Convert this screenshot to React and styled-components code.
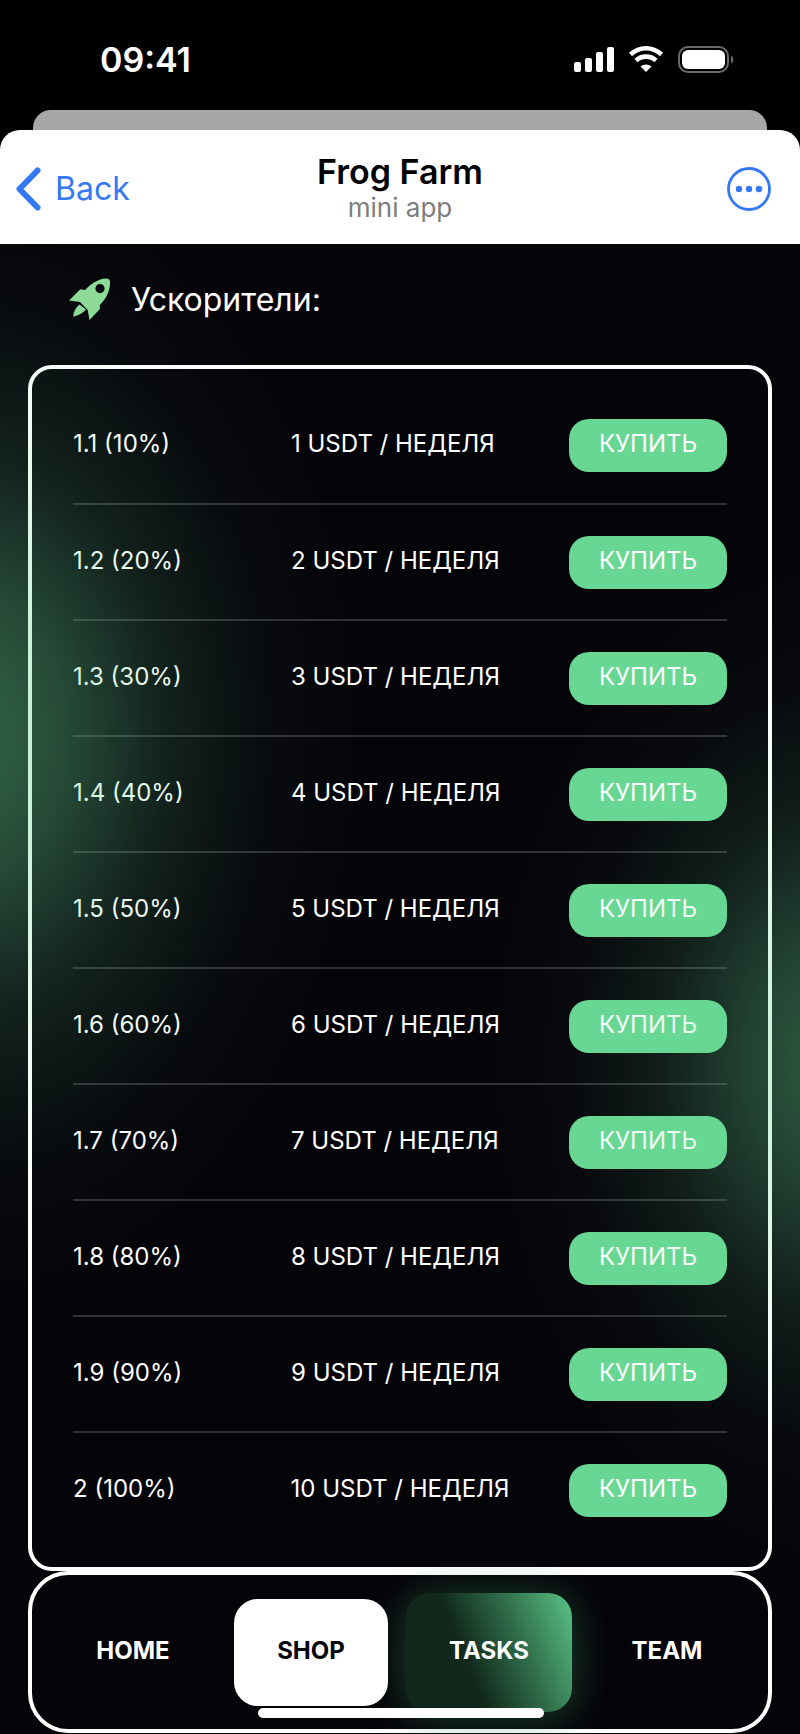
import React from "react";
import styled, { createGlobalStyle } from "styled-components";

const prices = [
  { id: 1, boost: "1.1 (10%)", price: "1 USDT / НЕДЕЛЯ" },
  { id: 2, boost: "1.2 (20%)", price: "2 USDT / НЕДЕЛЯ" },
  { id: 3, boost: "1.3 (30%)", price: "3 USDT / НЕДЕЛЯ" },
  { id: 4, boost: "1.4 (40%)", price: "4 USDT / НЕДЕЛЯ" },
  { id: 5, boost: "1.5 (50%)", price: "5 USDT / НЕДЕЛЯ" },
  { id: 6, boost: "1.6 (60%)", price: "6 USDT / НЕДЕЛЯ" },
  { id: 7, boost: "1.7 (70%)", price: "7 USDT / НЕДЕЛЯ" },
  { id: 8, boost: "1.8 (80%)", price: "8 USDT / НЕДЕЛЯ" },
  { id: 9, boost: "1.9 (90%)", price: "9 USDT / НЕДЕЛЯ" },
  { id: 10, boost: "2 (100%)", price: "10 USDT / НЕДЕЛЯ" },
];

const StatusIcons = () => (
  <svg width="162" height="28" viewBox="0 0 162 28" aria-hidden="true">
    <g fill="#fff">
      <rect x="1" y="17" width="7" height="10" rx="2" />
      <rect x="12" y="13" width="7" height="14" rx="2" />
      <rect x="23" y="7" width="7" height="20" rx="2" />
      <rect x="34" y="2" width="7" height="25" rx="2" />
      <rect x="109" y="5" width="43" height="19" rx="6" />
      <path d="M73 27l-5.500-5.500c3-2.700 8-2.700 11 0z" />
    </g>
    <path d="M57.500 9.500c9-8.300 22-8.300 31 0M63 15.500c5.800-5.200 14.200-5.200 20 0" fill="none" stroke="#fff" strokeWidth="4.600" />
    <rect x="106" y="2" width="49" height="25" rx="9" fill="none" stroke="#6b6b6b" strokeWidth="2" />
    <path d="M158 10.500c3 1.300 3 6.700 0 8z" fill="#6b6b6b" />
  </svg>
);

const BackIcon = () => (
  <svg width="26" height="44" viewBox="0 0 26 44" aria-hidden="true">
    <path d="M22.500 3.500L4.500 22l18 18.500" fill="none" stroke="#3478f6" strokeWidth="6" strokeLinecap="round" strokeLinejoin="round" />
  </svg>
);

const MoreIcon = () => (
  <svg width="44" height="44" viewBox="0 0 44 44" aria-hidden="true">
    <circle cx="22" cy="22" r="20.500" fill="none" stroke="#3478f6" strokeWidth="2.800" />
    <circle cx="12" cy="22" r="3.200" fill="#3478f6" />
    <circle cx="22" cy="22" r="3.200" fill="#3478f6" />
    <circle cx="32" cy="22" r="3.200" fill="#3478f6" />
  </svg>
);

const RocketIcon = () => (
  <svg width="42" height="42" viewBox="0 0 42 42" aria-hidden="true">
    <path
      fill="#8edb97"
      fillRule="evenodd"
      d="M0 22.500L10.500 12q.8-.8 2-.6l3.500.6C22 5.500 29 1 37 .5q3.500-.2 4 2.500c.5 9-3.500 17.500-10.200 24l.2 3q0 1-.8 1.800L20.500 42 18.700 32 11 24zM31 6a4.600 4.600 0 1 0 0 9.200A4.600 4.600 0 0 0 31 6z"
    />
    <path fill="#8edb97" d="M10.500 26.500l6.500 5c-3 3.500-7.500 6-12.800 7.200.3-4.500 2.300-9.200 6.300-12.200z" />
  </svg>
);

const App = () => {
  return (
    <>
      <GlobalStyle />
      <Screen>
        <StatusBar>
          <time>09:41</time>
          <StatusIcons />
        </StatusBar>
        <BackSheet />
        <Header>
          <BackButton type="button">
            <BackIcon />
            Back
          </BackButton>
          <Title>
            <h1>Frog Farm</h1>
            <p>mini app</p>
          </Title>
          <MoreButton type="button" aria-label="More">
            <MoreIcon />
          </MoreButton>
        </Header>

        <Content>
          <SectionTitle>
            <RocketIcon />
            Ускорители:
          </SectionTitle>

          <Panel>
            {prices.map((item) => (
              <Row key={item.id}>
                <Cell>{item.boost}</Cell>
                <Cell>{item.price}</Cell>
                <BuyButton type="button">КУПИТЬ</BuyButton>
              </Row>
            ))}
          </Panel>

          <Nav>
            <NavLink href="#home">HOME</NavLink>
            <NavLink href="#shop" $variant="active">SHOP</NavLink>
            <NavLink href="#tasks" $variant="glow">TASKS</NavLink>
            <NavLink href="#team">TEAM</NavLink>
          </Nav>
          <HomeIndicator />
        </Content>
      </Screen>
    </>
  );
};

const GlobalStyle = createGlobalStyle`
* {
  box-sizing: border-box;
}

body {
  margin: 0;
  background: #000;
}

button {
  padding: 0;
  border: none;
  background: none;
  font-family: inherit;
  cursor: pointer;
}
`;

const Screen = styled.div`
font-family: Inter, "Noto Sans", sans-serif;
color: #fff;
`;

const StatusBar = styled.div`
display: flex;
justify-content: space-between;
align-items: center;
height: 110px;
padding: 8px 65px 0 100px;
font-size: 34px;
font-weight: 600;
`;

const BackSheet = styled.div`
height: 20px;
margin: 0 33px;
border-radius: 18px 18px 0 0;
background: #a7a7a7;
`;

const Header = styled.header`
display: grid;
grid-template-columns: 1fr auto 1fr;
align-items: center;
height: 114px;
padding: 3px 15px 0;
border-radius: 20px 20px 0 0;
background: #fff;
`;

const BackButton = styled.button`
display: flex;
align-items: center;
gap: 14px;
color: #3478f6;
font-size: 32px;
line-height: 40px;
`;

const Title = styled.div`
padding-bottom: 2px;
text-align: center;

h1 {
  margin: 0;
  color: #000;
  font-size: 34px;
  line-height: 40px;
  font-weight: 600;
}

p {
  margin: 0;
  color: #7d7d7d;
  font-size: 26px;
  line-height: 32px;
}
`;

const MoreButton = styled.button`
justify-self: end;
height: 44px;
margin-right: 14px;
`;

/* the side glows lie over the text and borders and tint them */
const Content = styled.main`
position: relative;
padding: 0 28px 1px;
background: #050409;

&::after {
  content: "";
  position: absolute;
  inset: 0;
  pointer-events: none;
  background:
    radial-gradient(ellipse 390px 560px at -30px 33%, rgba(102, 215, 148, 0.46), rgba(102, 215, 148, 0.33) 25%, rgba(102, 215, 148, 0.14) 50%, rgba(102, 215, 148, 0.04) 75%, transparent),
    radial-gradient(ellipse 340px 500px at calc(100% + 30px) 55%, rgba(102, 215, 148, 0.42), rgba(102, 215, 148, 0.29) 25%, rgba(102, 215, 148, 0.12) 50%, rgba(102, 215, 148, 0.03) 75%, transparent);
}
`;

const SectionTitle = styled.h2`
display: flex;
align-items: center;
gap: 20px;
height: 121px;
margin: 0;
padding: 0 41px 11px;
font-size: 32px;
font-weight: 400;
`;

const Panel = styled.section`
padding: 18px 41px 20px;
border: 4px solid #fff;
border-radius: 24px;
`;

const Row = styled.div`
display: grid;
grid-template-columns: 1fr 1fr 1fr;
align-items: center;
height: 116px;
font-size: 24px;

& + & {
  border-top: 2px solid #303034;
}
`;

const Cell = styled.span`
padding-bottom: 4px;
white-space: nowrap;
`;

const BuyButton = styled.button`
justify-self: end;
width: 158px;
height: 53px;
padding-bottom: 4px;
border-radius: 20px;
background: #68d794;
color: #fff;
font-size: 24px;
`;

const Nav = styled.nav`
display: grid;
grid-template-columns: repeat(4, 1fr);
align-items: center;
height: 162px;
padding: 0 12px;
border: 4px solid #fff;
border-radius: 40px;
`;

const NavLink = styled.a`
position: relative;
z-index: ${({ $variant }) => ($variant === "active" ? 1 : 0)};
display: flex;
justify-content: center;
align-items: center;
height: ${({ $variant }) => ($variant === "glow" ? "119px" : "107px")};
margin: 0 ${({ $variant }) => ($variant === "glow" ? "6px" : "12px")};
padding-bottom: 4px;
border-radius: 24px;
background: ${({ $variant }) =>
  $variant === "active"
    ? "#fff"
    : $variant === "glow"
    ? "linear-gradient(68deg, #11291c 38%, #2f6b49 66%, #5bc385)"
    : "none"};
box-shadow: ${({ $variant }) => ($variant === "glow" ? "0 4px 44px rgba(50, 125, 80, 0.55)" : "none")};
color: ${({ $variant }) => ($variant === "active" ? "#050409" : "#fff")};
font-size: 24px;
font-weight: 700;
text-decoration: none;
`;

const HomeIndicator = styled.div`
position: absolute;
z-index: 1;
bottom: 16px;
left: 50%;
width: 286px;
height: 10px;
margin-left: -142px;
border-radius: 5px;
background: #fff;
`;

export default App;
